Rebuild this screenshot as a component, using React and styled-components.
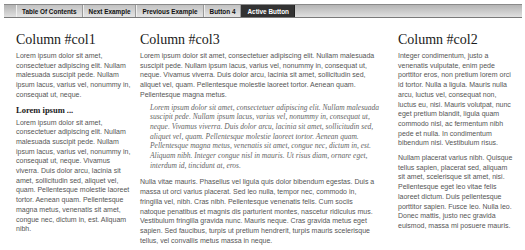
import React from "react";
import styled, { createGlobalStyle } from "styled-components";

const Global = createGlobalStyle`
  html, body { margin: 0; padding: 0; background: #fff; }
  body { font-family: "Liberation Sans", Arial, sans-serif; }
`;

const Page = styled.div`
  width: 525px;
  height: 250px;
  overflow: hidden;
  padding: 4px 3px 0 4px;
  box-sizing: border-box;
`;

const NavBar = styled.ul`
  display: flex;
  list-style: none;
  margin: 0;
  padding: 0 0 0 12px;
  height: 14px;
  border-top: 1px solid #8a8a8a;
  border-bottom: 1px solid #7a7a7a;
  background: linear-gradient(#b4b4b4, #e0e0e0);
  box-sizing: border-box;
`;

const NavItem = styled.li`
  display: flex;
  align-items: center;
  padding: 0 5px;
  height: 100%;
  font-size: 6.4px;
  font-weight: bold;
  color: ${(p) => (p.$active ? "#fff" : "#111")};
  background: ${(p) => (p.$active ? "#333" : "linear-gradient(#c2c2c2, #e4e4e4)")};
  border-left: 1px solid ${(p) => (p.$active ? "#333" : "#f0f0f0")};
  border-right: 1px solid ${(p) => (p.$active ? "#222" : "#9a9a9a")};
  white-space: nowrap;
`;

const Columns = styled.div`
  display: flex;
  align-items: flex-start;
  gap: 9px;
  padding-left: 12px;
  margin-top: 13px;
`;

const Col = styled.div`
  flex: 0 0 ${(p) => p.$w}px;
  ${(p) => p.$push && `margin-left: ${p.$push}px;`}
`;

const Heading = styled.h1`
  font-family: "Liberation Serif", "Times New Roman", serif;
  font-weight: normal;
  font-size: 14px;
  line-height: 17px;
  color: #1a1a1a;
  margin: 0 0 3px;
`;

const SubHeading = styled.h2`
  font-family: "Liberation Serif", "Times New Roman", serif;
  font-weight: bold;
  font-size: 8.5px;
  line-height: 10px;
  color: #1a1a1a;
  margin: 0 0 3px;
`;

const Text = styled.p`
  font-size: 7px;
  line-height: 9.7px;
  color: #555;
  margin: 0 0 5px;
`;

const Quote = styled.blockquote`
  font-family: "Liberation Serif", "Times New Roman", serif;
  font-style: italic;
  font-size: 7.5px;
  line-height: 9.7px;
  color: #666;
  margin: -2px 0 7px 10px;
`;

export default function App() {
  return (
    <Page>
      <Global />
      <NavBar>
        <NavItem>Table Of Contents</NavItem>
        <NavItem>Next Example</NavItem>
        <NavItem>Previous Example</NavItem>
        <NavItem>Button 4</NavItem>
        <NavItem $active>Active Button</NavItem>
      </NavBar>
      <Columns>
        <Col $w={115}>
          <Heading>Column #col1</Heading>
          <Text>
            Lorem ipsum dolor sit amet, consectetuer adipiscing elit. Nullam
            malesuada suscipit pede. Nullam ipsum lacus, varius vel, nonummy in,
            consequat ut, neque.
          </Text>
          <SubHeading>Lorem ipsum ...</SubHeading>
          <Text>
            Lorem ipsum dolor sit amet, consectetuer adipiscing elit. Nullam
            malesuada suscipit pede. Nullam ipsum lacus, varius vel, nonummy in,
            consequat ut, neque. Vivamus viverra. Duis dolor arcu, lacinia sit
            amet, sollicitudin sed, aliquet vel, quam. Pellentesque molestie
            laoreet tortor. Aenean quam. Pellentesque magna metus, venenatis sit
            amet, congue nec, dictum in, est. Aliquam nibh.
          </Text>
        </Col>
        <Col $w={240}>
          <Heading>Column #col3</Heading>
          <Text>
            Lorem ipsum dolor sit amet, consectetuer adipiscing elit. Nullam
            malesuada suscipit pede. Nullam ipsum lacus, varius vel, nonummy in,
            consequat ut, neque. Vivamus viverra. Duis dolor arcu, lacinia sit
            amet, sollicitudin sed, aliquet vel, quam. Pellentesque molestie
            laoreet tortor. Aenean quam. Pellentesque magna metus.
          </Text>
          <Quote>
            Lorem ipsum dolor sit amet, consectetuer adipiscing elit. Nullam
            malesuada suscipit pede. Nullam ipsum lacus, varius vel, nonummy in,
            consequat ut, neque. Vivamus viverra. Duis dolor arcu, lacinia sit
            amet, sollicitudin sed, aliquet vel, quam. Pellentesque molestie
            laoreet tortor. Aenean quam. Pellentesque magna metus, venenatis sit
            amet, congue nec, dictum in, est. Aliquam nibh. Integer congue nisl
            in mauris. Ut risus diam, ornare eget, interdum id, tincidunt at,
            eros.
          </Quote>
          <Text>
            Nulla vitae mauris. Phasellus vel ligula quis dolor bibendum
            egestas. Duis a massa ut orci varius placerat. Sed leo nulla, tempor
            nec, commodo in, fringilla vel, nibh. Cras nibh. Pellentesque
            venenatis felis. Cum sociis natoque penatibus et magnis dis
            parturient montes, nascetur ridiculus mus. Vestibulum fringilla
            gravida nunc. Mauris neque. Cras gravida metus eget sapien. Sed
            faucibus, turpis ut pretium hendrerit, turpis mauris scelerisque
            tellus, vel convallis metus massa in neque.
          </Text>
        </Col>
        <Col $w={116} $push={9}>
          <Heading>Column #col2</Heading>
          <Text>
            Integer condimentum, justo a venenatis vulputate, enim pede porttitor
            eros, non pretium lorem orci id tortor. Nulla a ligula. Mauris nulla
            arcu, luctus vel, consequat non, luctus eu, nisi. Mauris volutpat,
            nunc eget pretium blandit, ligula quam commodo nisl, ac fermentum
            nibh pede et nulla. In condimentum bibendum nisi. Vestibulum risus.
          </Text>
          <Text>
            Nullam placerat varius nibh. Quisque tellus sapien, placerat sed,
            aliquam sit amet, scelerisque sit amet, nisi. Pellentesque eget leo
            vitae felis laoreet dictum. Duis pellentesque porttitor sapien.
            Fusce leo. Nulla leo. Donec mattis, justo nec gravida euismod, massa
            mi posuere mauris.
          </Text>
        </Col>
      </Columns>
    </Page>
  );
}
